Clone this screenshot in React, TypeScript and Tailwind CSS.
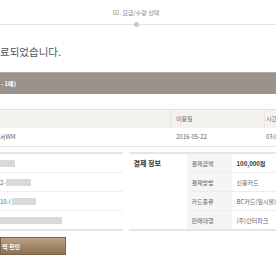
import React from "react";

const Blur = ({ w, ml = 0 }: { w: number; ml?: number }) => (
  <span
    className="inline-block h-[7px] bg-[#d9d9d9] blur-[0.6px] align-middle"
    style={{ width: w, marginLeft: ml }}
  />
);

export default function App() {
  return (
    <div className="w-[276px] h-[260px] overflow-hidden bg-white font-['Noto_Sans_CJK_KR','Noto_Sans',sans-serif] text-[#555]">
      {/* stepper */}
      <div className="pt-[9px] text-center text-[6px] leading-[8px] text-[#888] pr-[4px]">02. 요금/수량 선택</div>
      <div className="relative mt-[7px] h-px bg-[#e2e2e2]">
        <span className="absolute left-[134px] top-[-2px] h-[5px] w-[5px] rounded-full bg-[#c9c9c9]" />
      </div>

      {/* heading */}
      <div className="mt-[20px] text-[10.5px] leading-[14px] text-[#555]">료되었습니다.</div>

      {/* bar */}
      <div className="mt-[13px] flex h-[22px] items-center border-t border-[#b3aca4] bg-[#9b938b] pl-px text-[6px] font-bold text-white">
        - 1매)
      </div>

      {/* ticket table */}
      <div className="mt-[15px]">
        <div className="grid h-[19px] grid-cols-[171px_94px_1fr] border-t border-[#e4e0d8] bg-[#f4f2ee] text-[6px] leading-[18px] text-[#666]">
          <div className="border-r border-[#e9e6e0]" />
          <div className="border-r border-[#e9e6e0] pl-[5px]">이용일</div>
          <div className="overflow-hidden whitespace-nowrap pl-[1px]">시간</div>
        </div>
        <div className="grid h-[19px] grid-cols-[171px_94px_1fr] border-b border-[#e6e3dd] text-[6px] leading-[18px] text-[#666]">
          <div className="pl-0">서WM</div>
          <div className="pl-[5px]">2016-05-22</div>
          <div className="overflow-hidden whitespace-nowrap pl-[1px]">03:00</div>
        </div>
      </div>

      {/* bottom info */}
      <div className="mt-[5px] flex">
        <div className="w-[134px]">
          <div className="border-y-2 border-[#e8e5dd] text-[6px] text-[#666]">
            <div className="flex h-[19px] items-center border-b border-[#efefef]">
              <Blur w={15} />
            </div>
            <div className="flex h-[19px] items-center border-b border-[#efefef]">
              <span>2-</span>
              <Blur w={25} ml={1} />
            </div>
            <div className="flex h-[19px] items-center border-b border-[#efefef]">
              <span>10-(</span>
              <Blur w={24} ml={1} />
            </div>
            <div className="flex h-[18px] items-center">
              <Blur w={62} />
            </div>
          </div>
          <div className="mt-[6px] flex h-[18px] w-[66px] items-center border border-[#7d6449] bg-gradient-to-b from-[#bba283] to-[#8d7152] pl-px text-[6px] font-bold text-white">
            역 확인
          </div>
        </div>

        <div className="ml-[6px] flex-1 self-start border-y-2 border-[#e8e5dd]">
          <div className="flex">
            <div className="w-[58px] pl-[5px] pt-[4px] text-[7px] font-bold leading-[10px] text-[#333]">결제 정보</div>
            <div className="flex-1 text-[6px] text-[#666]">
              {[
                ["결제금액", "100,000원", true],
                ["결제방법", "신용카드", false],
                ["카드종류", "BC카드(일시불)", false],
                ["판매대행", "(주)인터파크", false],
              ].map(([l, v, b], i) => (
                <div
                  key={i}
                  className={`flex ${i < 3 ? "h-[19px] border-b" : "h-[18px]"} border-[#ededed]`}
                >
                  <div className="flex w-[45px] items-center bg-[#f5f5f5] pl-[5px]">{l}</div>
                  <div
                    className={`flex flex-1 items-center overflow-hidden whitespace-nowrap pl-[5px] ${
                      b ? "font-bold text-[#333]" : ""
                    }`}
                  >
                    {v}
                  </div>
                </div>
              ))}
            </div>
          </div>
        </div>
      </div>
    </div>
  );
}
